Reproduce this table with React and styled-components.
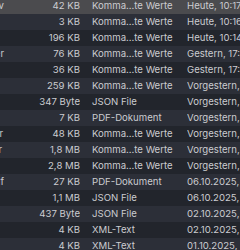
import React from "react";
import styled, { createGlobalStyle } from "styled-components";

const Global = createGlobalStyle`
  html, body { margin: 0; padding: 0; background: #22252c; }
  body { font-family: Inter, "Noto Sans", "Liberation Sans", sans-serif; }
`;

const Viewport = styled.div`
  width: 240px;
  height: 250px;
  overflow: hidden;
  background: #22252c;
`;

const List = styled.div`
  display: flex;
  flex-direction: column;
  margin-top: -2px;
`;

const Row = styled.div`
  display: grid;
  grid-template-columns: 6px 74px 107px 80px;
  align-items: center;
  height: 16px;
  background: ${(p) => (p.$selected ? "#4b4b4e" : p.$odd ? "#2c2f38" : "#22252c")};
  color: #cbccd0;
  font-size: 9.6px;
  line-height: 16px;
  white-space: nowrap;
`;

const NameCell = styled.div`
  display: flex;
  justify-content: flex-end;
  overflow: hidden;
  padding-right: ${(p) => p.$pad}px;
`;

const SizeCell = styled.div`
  text-align: right;
  overflow: hidden;
`;

const KindCell = styled.div`
  padding-left: 12px;
  overflow: hidden;
`;

const DateCell = styled.div`
  overflow: hidden;
`;

const CSV = "Komma…te Werte";

const rows = [
  { name: "export_ordersv", pad: 2, size: "42 KB", kind: CSV, date: "Heute, 10:17" },
  { name: "", size: "3 KB", kind: CSV, date: "Heute, 10:16" },
  { name: "", size: "196 KB", kind: CSV, date: "Heute, 10:14" },
  { name: "lieferanten_lager", pad: 2, size: "76 KB", kind: CSV, date: "Gestern, 17:24" },
  { name: "", size: "36 KB", kind: CSV, date: "Gestern, 17:12" },
  { name: "", size: "259 KB", kind: CSV, date: "Vorgestern, 16:40" },
  { name: "", size: "347 Byte", kind: "JSON File", date: "Vorgestern, 15:02" },
  { name: "", size: "7 KB", kind: "PDF-Dokument", date: "Vorgestern, 14:51" },
  { name: "bestellungen_lager", pad: 3, size: "48 KB", kind: CSV, date: "Vorgestern, 12:33" },
  { name: "artikel_export_ver", pad: 4, size: "1,8 MB", kind: CSV, date: "Vorgestern, 11:09" },
  { name: "", size: "2,8 MB", kind: CSV, date: "Vorgestern, 09:47" },
  { name: "rechnung_2025.pdf", pad: 2, size: "27 KB", kind: "PDF-Dokument", date: "06.10.2025, 18:20" },
  { name: "", size: "1,1 MB", kind: "JSON File", date: "06.10.2025, 17:05" },
  { name: "", size: "437 Byte", kind: "JSON File", date: "02.10.2025, 16:18" },
  { name: "", size: "4 KB", kind: "XML-Text", date: "02.10.2025, 10:44" },
  { name: "", size: "4 KB", kind: "XML-Text", date: "01.10.2025, 13:30" },
];

export default function App() {
  return (
    <>
      <Global />
      <Viewport>
        <List>
          {rows.map((r, i) => (
            <Row key={i} $selected={i === 0} $odd={i % 2 === 1}>
              <NameCell $pad={r.pad || 0}>{r.name}</NameCell>
              <SizeCell>{r.size}</SizeCell>
              <KindCell>{r.kind}</KindCell>
              <DateCell>{r.date}</DateCell>
            </Row>
          ))}
        </List>
      </Viewport>
    </>
  );
}
